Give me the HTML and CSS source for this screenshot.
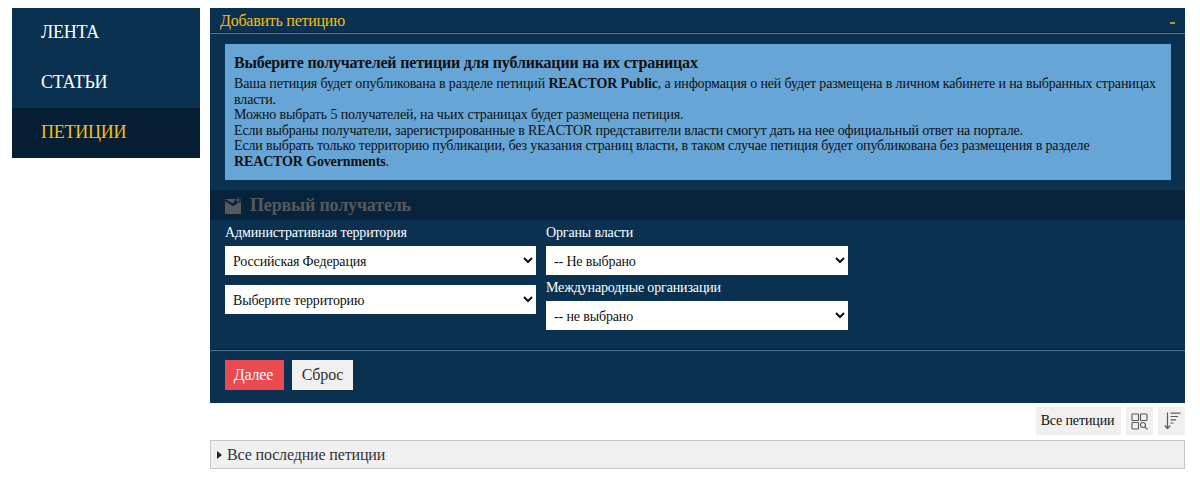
FILE: index.html
```html
<!DOCTYPE html>
<html lang="ru">
<head>
<meta charset="utf-8">
<title>Добавить петицию</title>
<link rel="stylesheet" href="styles.css">
</head>
<body>
<div class="layout">
  <nav class="nav">
    <a class="nav-item">ЛЕНТА</a>
    <a class="nav-item">СТАТЬИ</a>
    <a class="nav-item active">ПЕТИЦИИ</a>
  </nav>
  <main class="main">
    <section class="panel">
      <header class="panel-head"><span>Добавить петицию</span><span class="collapse"></span></header>
      <div class="info">
        <h3 class="info-title">Выберите получателей петиции для публикации на их страницах</h3>
        <p class="info-text">Ваша петиция будет опубликована в разделе петиций <b>REACTOR Public</b>, а информация о ней будет размещена в личном кабинете и на выбранных страницах власти.<br>Можно выбрать 5 получателей, на чьих страницах будет размещена петиция.<br>Если выбраны получатели, зарегистрированные в REACTOR представители власти смогут дать на нее официальный ответ на портале.<br>Если выбрать только территорию публикации, без указания страниц власти, в таком случае петиция будет опубликована без размещения в разделе <b class="nowrap">REACTOR Governments</b>.</p>
      </div>
      <div class="recipient">
        <svg class="recipient-icon" width="16" height="17" viewBox="0 0 16 17"><path fill="#56595c" d="M0 2h10v1L7.800 6.300z"/><path fill="#56595c" d="M0 4l7.800 5.200L16 4.500V17H0z"/><path fill="#56595c" d="M12.500 0h1v2.500H16v1h-2.500V6h-1V3.500H10.500v-1h2z"/></svg>
        <span>Первый получатель</span>
      </div>
      <div class="form">
        <div class="col col-a">
          <label class="label">Административная территория</label>
          <select class="select"><option>Российская Федерация</option></select>
          <select class="select second"><option>Выберите территорию</option></select>
        </div>
        <div class="col col-b">
          <label class="label">Органы власти</label>
          <select class="select"><option>-- Не выбрано</option></select>
          <label class="label label-low">Международные организации</label>
          <select class="select"><option>-- не выбрано</option></select>
        </div>
      </div>
      <div class="actions">
        <button class="btn btn-primary">Далее</button>
        <button class="btn btn-reset">Сброс</button>
      </div>
    </section>
    <div class="toolbar">
      <button class="tool tool-text">Все петиции</button>
      <button class="tool">
        <svg width="17" height="17" viewBox="0 0 17 17" fill="none" stroke="#5a5a5a" stroke-width="1.100"><rect x="1" y="1" width="6.500" height="6.500" rx="0.500"/><rect x="9.500" y="1" width="6.500" height="6.500" rx="0.500"/><rect x="1" y="9.500" width="6.500" height="6.500" rx="0.500"/><circle cx="12" cy="12" r="2.500"/><path d="M13.800 13.800l2.700 2.700"/></svg>
      </button>
      <button class="tool">
        <svg width="18" height="18" viewBox="0 0 18 18" fill="none" stroke="#5a5a5a" stroke-width="1.200"><path d="M4.500 0.500v16M1.800 13.500l2.700 3 2.700-3"/><path d="M7.500 1.200h10M7.500 4.500h7.500M7.500 7.800h5.500M7.500 11h3"/></svg>
      </button>
    </div>
    <div class="accordion"><span class="arrow"></span>Все последние петиции</div>
  </main>
</div>
</body>
</html>
```
FILE: styles.css
```css
* { box-sizing: border-box; }
html, body { margin: 0; padding: 0; background: #fff; }
body { font-family: "Liberation Serif", "Times New Roman", serif; font-size: 14px; color: #111; height: 478px; overflow: hidden; }
.layout { display: flex; align-items: flex-start; gap: 10px; padding: 8px 15px 0 12px; }
.nav { width: 188px; flex: none; background: #0b3150; display: flex; flex-direction: column; }
.nav-item { height: 50px; display: flex; align-items: center; padding: 0 0 1px 29px; color: #fff; font-size: 18px; letter-spacing: -0.25px; }
.nav-item.active { background: #061e33; color: #f6be16; }
.main { width: 975px; flex: none; }
.panel { background: #0b3150; height: 395px; }
.panel-head { height: 26px; padding: 1px 10px 0 10px; display: flex; justify-content: space-between; align-items: center; color: #f6be16; font-size: 16px; letter-spacing: -0.25px; border-bottom: 1px solid #4a7598; box-shadow: inset 0 -1px 0 #05233c; }
.collapse { width: 5px; height: 2px; background: #b8953a; margin-top: 3px; }
.info { margin: 10px 14px 0 15px; height: 136px; background: #66a5d6; padding: 9px 9px; }
.info-title { margin: 0 0 4px; font-size: 16px; letter-spacing: -0.18px; font-weight: bold; color: #111; line-height: 19px; }
.info-text { margin: 0; font-size: 14px; letter-spacing: -0.14px; line-height: 15.600px; color: #111; }
.nowrap { white-space: nowrap; }
.recipient { margin-top: 10px; height: 30px; background: #08243d; display: flex; align-items: center; gap: 9px; padding-left: 15px; color: #56595c; font-size: 18px; letter-spacing: -0.18px; font-weight: bold; }
.form { display: flex; gap: 10px; padding: 5px 15px 0; height: 131px; border-bottom: 1px solid #4a7598; box-shadow: inset 0 -1px 0 #05233c; }
.col-a { width: 311px; }
.col-b { width: 302px; }
.label { display: block; color: #fff; font-size: 14px; letter-spacing: -0.14px; line-height: 16px; margin: 0 0 5px; }
.label-low { margin: 5px 0 5px; }
.select { display: block; width: 100%; height: 29px; background: #fff; border: 0; border-radius: 0; padding: 1px 4px 0; font-family: inherit; font-size: 14px; letter-spacing: -0.14px; color: #111; }
.second { margin-top: 10px; }
.actions { display: flex; gap: 8px; padding: 9px 15px; }
.btn { width: 61px; height: 30px; padding: 0; border: 0; background: #f0f0f0; color: #333; font-family: inherit; font-size: 16px; letter-spacing: -0.18px; }
.btn-primary { width: 59px; padding-right: 2px; background: #ea4a50; color: #fff; }
.toolbar { display: flex; justify-content: flex-end; gap: 5px; margin-top: 4px; height: 28px; }
.tool { width: 27px; height: 28px; padding: 0; border: 0; background: #f0f0f0; display: flex; align-items: center; justify-content: center; font-family: inherit; font-size: 14px; color: #111; }
.tool-text { width: 85px; padding-right: 2px; font-size: 14px; letter-spacing: -0.14px; }
.accordion { margin-top: 5px; height: 29px; background: #f0f0f0; border: 1px solid #c8c8c8; display: flex; align-items: center; padding-left: 6px; font-size: 16px; letter-spacing: -0.15px; color: #333; }
.arrow { width: 0; height: 0; border-left: 5px solid #222; border-top: 4px solid transparent; border-bottom: 4px solid transparent; margin-right: 5px; }
```
